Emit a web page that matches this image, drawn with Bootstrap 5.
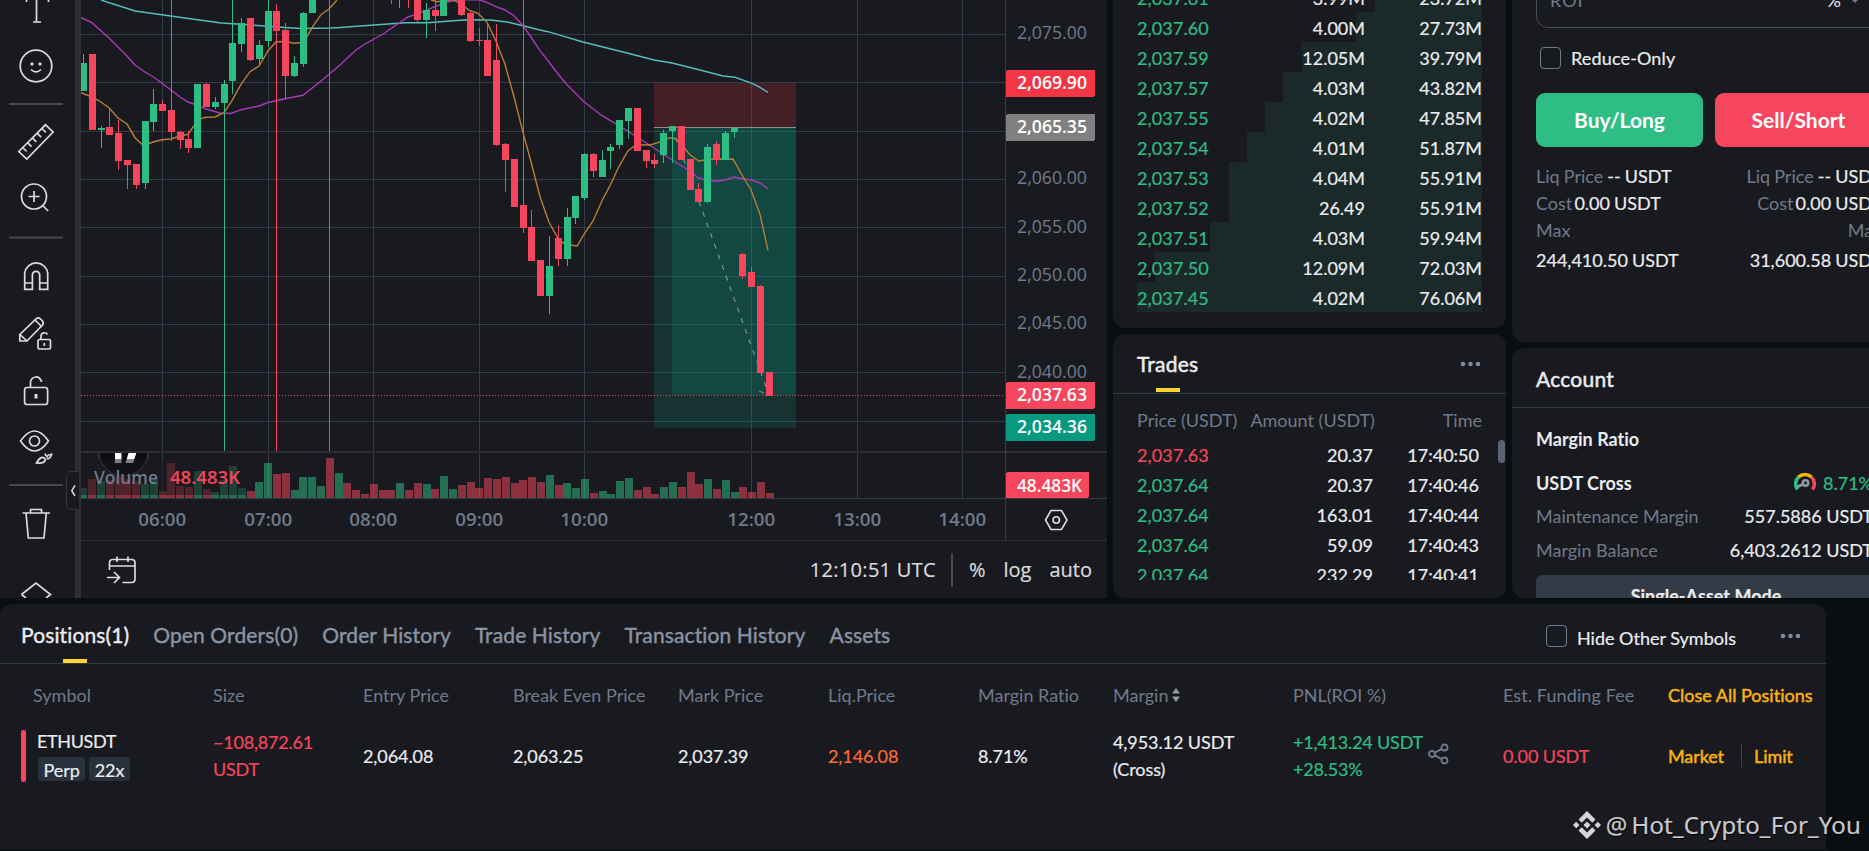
<!DOCTYPE html>
<html lang="en" data-bs-theme="dark">
<head>
<meta charset="utf-8">
<meta name="viewport" content="width=device-width, initial-scale=1">
<title>ETHUSDT Perpetual</title>
<link href="https://cdn.jsdelivr.net/npm/bootstrap@5.3.0/dist/css/bootstrap.min.css" rel="stylesheet">
<style>
:root{--panel:#191a1f;--page:#0b0e11;--line:#333b47;--txt:#eaecef;--dim:#707a8a;--buy:#2ebd85;--sell:#f6465d;--gold:#f8b014}
body{width:1869px;height:851px;overflow:hidden;background:var(--page);color:var(--txt);font:18px/30px Lato,"Liberation Sans",sans-serif;font-variant-numeric:tabular-nums;font-variant-ligatures:none;-webkit-text-stroke:.2px;margin:0}
.c-dim{color:var(--dim);-webkit-text-stroke:0}.c-buy{color:var(--buy)}.c-sell{color:var(--sell)}.c-gold{color:var(--gold)}.c-warn{color:#ff6838}
.c-gold{-webkit-text-stroke:.5px}
svg{-webkit-text-stroke:0}
.panel{background:var(--panel);border-radius:12px;overflow:hidden}
.top-area{height:598px;gap:6px}
.chart-col{width:1107px;background:var(--panel)}
.toolbar-l{width:75px}
.gutter{width:6px;background:#2e2e30}
.tv{font-family:"Open Sans","Noto Sans",sans-serif}
.foot-bar{height:57px;border-top:1px solid #2e2e30;font-size:20px;padding:1px 15px 0 26px;color:#dbdbdb}
.foot-sep{width:2px;height:34px;background:#4a4a4e;margin:0 16px 0 15px}
.foot-gap{margin-left:18px}
.collapse-tab{left:66px;top:471px}
.col-w{width:393px}
.gap-top{margin-top:6px}
.book{height:328px;border-radius:0 0 12px 12px}
.book-rows{margin-top:-18px;padding:0 24px}
.book-row{display:grid;grid-template-columns:117px 111px 117px;height:30px;line-height:32px}
.book-row .c-buy,.trade-row .c-buy,.trade-row .c-sell{letter-spacing:.12px}
.trades{height:264px}
.head{height:60px;border-bottom:1px solid var(--line);font-size:21px;padding:1px 24px 0;letter-spacing:.25px;-webkit-text-stroke:.5px}
.mark-y{height:4px;width:24px;background:#fcd535}
.trade-head{padding:11px 24px 5px}
.trade-row{display:grid;grid-template-columns:116px 120px 106px;height:30px}
.trade-list{height:140px;overflow:hidden;padding:0 24px}
.thumb{right:1px;top:106px;width:7px;height:23px;border-radius:4px;background:#5b6370}
.col-r{width:394px}
.order{height:342px;border-radius:0 0 12px 12px;padding:0 24px}
.roi{height:60px;margin-top:-32px;border:1px solid #474d57;border-radius:12px;padding:16px 12px 0 13px}
.box{width:21px;height:22px;border:1.5px solid #707a8a;border-radius:4px}
.trade-btn{width:167px;height:54px;border-radius:9px;border:0;color:#fff;font-size:21px;font-weight:700;padding:0;-webkit-text-stroke:0}
.bg-buy{background:var(--buy)}.bg-sell{background:var(--sell)}
.est{line-height:27px;margin-top:16px;word-spacing:-.5px}
.est .cost{margin-right:-2px}
.account{height:250px}
.account .body-x{padding:0 33px 0 24px}
.account b{-webkit-text-stroke:0}
.single{height:54px;margin-top:10px;margin-right:-11px;padding-right:8px;background:var(--line);border-radius:6px;font-weight:700;line-height:42px}
.positions{width:1826px;height:246px;margin-top:6px;border-radius:12px 12px 0 0}
.tabs-row{height:60px;border-bottom:1px solid var(--line);font-size:21px;padding:0 21px;gap:24px;color:#8b94a3;letter-spacing:.12px;-webkit-text-stroke:.4px}
.tabs-row .tab-t{margin-top:16px}
.tabs-row .on{color:var(--txt)}
.hide-sym{font-size:18px;padding-top:8px;letter-spacing:0;-webkit-text-stroke:.2px}
.pos-grid{display:grid;grid-template-columns:180px 150px 150px 165px 150px 150px 135px 180px 210px 165px 160px;padding-left:33px;align-items:center}
.pos-head{margin-top:16px}
.pos-row{line-height:27px;height:56px;margin-top:18px;letter-spacing:-.08px}
.side{width:5px;height:52px;border-radius:2px;background:var(--sell);margin:0 11px 0 -12px}
.chip{background:#29313d;border-radius:4px;height:24px;line-height:26px;padding:0 5.5px}
.act-sep{width:1px;height:24px;background:#3b4350;margin:0 12px 0 17px}
.wm{right:8px;bottom:8px;font:24px/36px "Noto Sans",sans-serif;letter-spacing:.15px;color:#c8c9cb;text-shadow:1px 1px 1px #000}
.nowrap{white-space:nowrap}
</style>
</head>
<body>
<div class="d-flex top-area overflow-hidden">
  <section class="chart-col d-flex position-relative flex-shrink-0">
    <div class="toolbar-l">
      <svg width="75" height="598" fill="none" stroke="#dbdbdb" stroke-width="1.7">
        <path d="M36.5 0V22M33 22h8M26.500 0v2M48.500 0v2"/>
        <circle cx="36" cy="66" r="15.800"/><path d="M31 69.500q5 5 10 0"/><circle cx="32" cy="64" r="1.200" fill="#dbdbdb" stroke-width="1"/><circle cx="40" cy="64" r="1.200" fill="#dbdbdb" stroke-width="1"/>
        <path d="M9 104H63M9 237.500H63M9 485H63" stroke="#4a4a4e" stroke-width="2"/>
        <path d="M18.800 151.500L45.500 124.800l7.600 7.200L26.800 159zM22.700 147.500l4 4M27.500 142.700l4 4M32.300 137.900l4 4M37.100 133.100l4 4M41.900 128.500l4 4"/>
        <circle cx="34" cy="196.500" r="12.500"/><path d="M34 191v11M28.500 196.500h11M42.700 205.500l5.500 5.500"/>
        <path d="M24.700 289.300V273a11.600 11.600 0 0 1 23 0V289.300h-8V274.500a3.700 3.700 0 0 0-7.300 0V289.300zM24.700 283h7.700M39.800 283h8"/>
        <path d="M19.800 341v-6.500L36.500 318.500q2-1.500 4 .5l2 2q1.500 2 0 4L27 341zM20 334.500l7 6.500M35 320l7 7"/>
        <rect x="38" y="339.500" width="12.500" height="9.500" rx="1.500"/><path d="M41 339v-3a3.500 3.500 0 0 1 6.500-1.500M44.300 343v3"/>
        <rect x="24.600" y="387.500" width="23" height="17" rx="2.500"/><path d="M30.500 387v-4a5.500 5.500 0 0 1 11-1"/><path d="M36 394v4.500" stroke-width="3"/>
        <path d="M20.500 441q14-20 28 0q-14 20-28 0z"/><circle cx="34.500" cy="441" r="5"/>
        <path d="M36.500 463q5-9 9-3.500q-1 4.500-9 3.500zM47 458q-1-3 5.500-4M46 456l-1-2.500M47 459q3 0 5-5"/>
        <path d="M22.500 513H50M30.500 513v-3.500h11V513M26 513l2.300 25H44L46.300 513"/>
        <path d="M21.500 594.500L36 583l14.500 11.500L46 598M21.500 594.500L26 598"/>
      </svg>
    </div>
    <div class="gutter"></div>
    <div class="d-flex flex-column flex-grow-1">
      <svg id="chart" class="tv d-block" width="1026" height="540" viewBox="81 0 1026 540" shape-rendering="crispEdges"></svg>
      <div class="foot-bar tv d-flex align-items-center">
        <svg width="30" height="30" viewBox="0 0 30 30" fill="none" stroke="#dbdbdb" stroke-width="1.700"><path d="M2.500 15V7.500a3 3 0 0 1 3-3H25a3 3 0 0 1 3 3V24.500a3 3 0 0 1-3 3H15.500M2.500 11H28M10 1.500v5.500M21 1.500v5.500M0 22.500H12M7 17l5.500 5.500L7 28"/></svg>
        <span class="ms-auto nowrap" style="letter-spacing:.3px">12:10:51 UTC</span><span class="foot-sep"></span><span>%</span><span class="foot-gap">log</span><span class="foot-gap">auto</span>
      </div>
    </div>
    <svg class="position-absolute collapse-tab" width="13" height="40" fill="none"><path d="M13 .5H5a4.500 4.500 0 0 0-4.500 4.500V34a4.500 4.500 0 0 0 4.500 4.500h8" fill="#191a1f" stroke="#34353a"/><path d="M9 14.500l-3.200 5.200L9 25" stroke="#dbdbdb" stroke-width="1.500"/></svg>
  </section>

  <section class="d-flex flex-column col-w flex-shrink-0">
    <div class="panel book"><div class="book-rows" id="book"></div></div>
    <div class="panel trades position-relative gap-top">
      <div class="head d-flex justify-content-between">
        <div class="d-flex flex-column align-items-center"><span class="lh-1" style="margin-top:18px">Trades</span><span class="mark-y" style="margin-top:14px"></span></div>
        <svg width="22" height="60" fill="#8089a0" style="margin-right:1px"><circle cx="4" cy="29" r="2.300"/><circle cx="11.500" cy="29" r="2.300"/><circle cx="19" cy="29" r="2.300"/></svg>
      </div>
      <div class="d-flex c-dim nowrap trade-head"><span>Price (USDT)</span><span style="margin-left:13px">Amount (USDT)</span><span class="ms-auto">Time</span></div>
      <div class="trade-list" id="trades"></div>
      <div class="thumb position-absolute"></div>
    </div>
  </section>

  <section class="col-r flex-shrink-0">
    <div class="panel order">
      <div class="roi d-flex c-dim justify-content-between"><span style="letter-spacing:1px">ROI</span><span class="d-flex gap-2" style="color:var(--txt);padding-right:8px">%<svg width="12" height="30" fill="#707a8a"><path d="M2 14h8l-4 4z"/></svg></span></div>
      <div class="d-flex align-items-center" style="margin:15px 0 0 4px"><span class="box"></span><span style="margin-left:10px;letter-spacing:.15px">Reduce-Only</span></div>
      <div class="d-flex justify-content-between" style="margin-top:20px"><button class="trade-btn bg-buy">Buy/Long</button><button class="trade-btn bg-sell">Sell/Short</button></div>
      <div class="d-flex justify-content-between est">
        <div><span class="c-dim">Liq Price</span> -- USDT<br><span class="c-dim cost">Cost</span> 0.00 USDT<br><span class="c-dim">Max</span><br><span class="d-block" style="margin-top:3px">244,410.50 USDT</span></div>
        <div class="text-end"><span class="c-dim">Liq Price</span> -- USDT<br><span class="c-dim cost">Cost</span> 0.00 USDT<br><span class="c-dim">Max</span><br><span class="d-block" style="margin-top:3px">31,600.58 USDT</span></div>
      </div>
    </div>
    <div class="panel account gap-top">
      <div class="head lh-1" style="padding-top:20px">Account</div>
      <div class="body-x">
        <div class="fw-bold" style="margin-top:16px;-webkit-text-stroke:0">Margin Ratio</div>
        <div class="d-flex justify-content-between" style="margin-top:14px"><b>USDT Cross</b>
          <span class="c-buy d-flex align-items-center" style="gap:6px"><svg width="24" height="22" fill="none" stroke-width="3.600" style="margin-top:-3px"><path d="M4.500 18.500A9.500 9.500 0 0 1 5.500 6" stroke="#2ebd85"/><path d="M5.500 6a9.500 9.500 0 0 1 13 0" stroke="#f0b90b"/><path d="M18.500 6a9.500 9.500 0 0 1 1 12.500" stroke="#f6465d"/><circle cx="12.500" cy="12" r="2.700" stroke="#929aa5" stroke-width="2.600"/><path d="M4 16l6.500-3" stroke="#929aa5" stroke-width="2.500"/></svg>8.71%</span></div>
        <div class="d-flex justify-content-between" style="margin-top:3px"><span class="c-dim">Maintenance Margin</span><span>557.5886 USDT</span></div>
        <div class="d-flex justify-content-between" style="margin-top:4px"><span class="c-dim">Margin Balance</span><span>6,403.2612 USDT</span></div>
        <div class="single text-center">Single-Asset Mode</div>
      </div>
    </div>
  </section>
</div>

<section class="panel positions">
  <div class="tabs-row d-flex nowrap">
    <div class="on d-flex flex-column align-items-center"><span class="tab-t">Positions(1)</span><span class="mark-y mt-auto"></span></div>
    <span class="tab-t">Open Orders(0)</span><span class="tab-t">Order History</span><span class="tab-t">Trade History</span><span class="tab-t">Transaction History</span><span class="tab-t">Assets</span>
    <div class="d-flex align-items-center ms-auto on hide-sym"><span class="box" style="margin-top:-4px"></span><span style="margin-left:10px">Hide Other Symbols</span>
    <svg width="22" height="20" fill="#8089a0" style="margin:-1px 4px 0 43px"><circle cx="4" cy="9" r="2.300"/><circle cx="11.500" cy="9" r="2.300"/><circle cx="19" cy="9" r="2.300"/></svg></div>
  </div>
  <div class="pos-grid pos-head c-dim nowrap">
    <span>Symbol</span><span>Size</span><span>Entry Price</span><span>Break Even Price</span><span>Mark Price</span><span>Liq.Price</span><span>Margin Ratio</span>
    <span>Margin <svg width="10" height="16" fill="#929aa5" style="margin:-4px 0 0 -2px"><path d="M5 1l4 5.500H1zM5 15l4-5.500H1z"/></svg></span><span>PNL(ROI %)</span><span style="letter-spacing:.1px">Est. Funding Fee</span><span class="c-gold">Close All Positions</span>
  </div>
  <div class="pos-grid pos-row nowrap">
    <div class="d-flex align-items-center"><span class="side"></span><div style="margin-top:-4px"><div style="letter-spacing:-.35px">ETHUSDT</div><div class="d-flex" style="gap:4px;margin:2px 0 0 1px"><span class="chip">Perp</span><span class="chip">22x</span></div></div></div>
    <span class="c-sell" style="letter-spacing:-.2px">−108,872.61<br>USDT</span><span>2,064.08</span><span>2,063.25</span><span>2,037.39</span><span class="c-warn">2,146.08</span><span>8.71%</span>
    <span>4,953.12 USDT<br>(Cross)</span>
    <span class="c-buy d-flex align-items-center"><span style="letter-spacing:-.2px">+1,413.24 USDT<br>+28.53%</span>
      <svg width="22" height="22" fill="none" stroke="#707a8a" stroke-width="1.800" style="margin:-4px 0 0 5px"><circle cx="4" cy="11" r="3"/><circle cx="16.500" cy="4.500" r="3"/><circle cx="16.500" cy="17.500" r="3"/><path d="M6.700 9.600l7.200-3.700M6.700 12.400l7.200 3.700"/></svg></span>
    <span class="c-sell">0.00 USDT</span>
    <span class="c-gold d-flex">Market<i class="act-sep"></i>Limit</span>
  </div>
</section>
<div class="wm position-absolute d-flex align-items-center nowrap">
  <svg width="28" height="28" viewBox="0 0 28 28" fill="#d4d5d7"><path d="M14 0l8.500 8.500-3.200 3.200L14 6.400l-5.300 5.300-3.200-3.200zM14 28l8.500-8.500-3.200-3.200L14 21.600l-5.300-5.300-3.200 3.200zM3.200 10.800L6.400 14l-3.200 3.200L0 14zM24.800 10.800L28 14l-3.200 3.200-3.200-3.200zM14 10.500l3.500 3.500-3.500 3.500-3.500-3.500z"/></svg>
  <span style="margin-left:5px">@</span><span style="margin-left:4px">Hot_Crypto_For_You</span>
</div>

<script src="https://cdn.jsdelivr.net/npm/bootstrap@5.3.0/dist/js/bootstrap.bundle.min.js"></script>
<script>
// Order book: price, amount, cumulative total, depth bar width
document.getElementById('book').innerHTML=[
['2,037.61','3.99M','23.72M',107],['2,037.60','4.00M','27.73M',126],['2,037.59','12.05M','39.79M',180],['2,037.57','4.03M','43.82M',199],
['2,037.55','4.02M','47.85M',217],['2,037.54','4.01M','51.87M',235],['2,037.53','4.04M','55.91M',253],['2,037.52','26.49','55.91M',253],
['2,037.51','4.03M','59.94M',272],['2,037.50','12.09M','72.03M',327],['2,037.45','4.02M','76.06M',345]
].map(([p,a,t,w])=>`<div class="book-row" style="background:linear-gradient(#1b2929,#1b2929) right/${w}px 100% no-repeat"><span class="c-buy">${p}</span><span class="text-end">${a}</span><span class="text-end">${t}</span></div>`).join('');
document.getElementById('trades').innerHTML=[
['2,037.63','20.37','17:40:50'],['2,037.64','20.37','17:40:46'],['2,037.64','163.01','17:40:44'],['2,037.64','59.09','17:40:43'],['2,037.64','232.29','17:40:41']
].map(([p,a,t],i)=>`<div class="trade-row"><span class="${i?'c-buy':'c-sell'}">${p}</span><span class="text-end">${a}</span><span class="text-end">${t}</span></div>`).join('');

// Chart
const G='#2ebd85',R='#f6465d';let s='';
const rect=(x,y,w,h,f,o='')=>s+=`<rect x="${x}" y="${y}" width="${w}" height="${h}" fill="${f}" ${o}/>`;
for(const x of [162,268,373,479,584,751,857,962])rect(x,0,1,498,'#333b47');
for(const y of [34,82,131,179,227,276,324,372,421])rect(81,y,924,1,'#333b47');
rect(654,83,142,44,'#f23645','opacity=".2"');
rect(654,128,142,300,'#089981','opacity=".2"');
rect(672,128,124,267,'#089981','opacity=".2"');
rect(654,127,142,1,'#8a8c90');
s+='<g shape-rendering="auto"><path d="M672 127L769 395" stroke="#8a8c90" stroke-width="1.2" stroke-dasharray="5 6.300" fill="none"/><path d="M759 391l5 2" stroke="#8a8c90"/>';
const line=(p,c)=>s+=`<polyline points="${p}" fill="none" stroke="${c}" stroke-width="1.4"/>`;
line('101,0 135,11 185,18 221,23 245,24.5 285,27.5 301,28.5 330,28 340,27.500 405,22.700 427,22.700 467,19.700 490,20 507,22 523,25.700 540,30 548,31.700 583,42 603,47 630,53.700 654,60 672,63 700,70 723,76 735,77.300 752,83.300 760,87.300 768,92.500','#57bcbc');
line('81,17.700 92,22.700 109,38 127,56 135,65 145,72 155,78 171,90 180,97 188,102 197,105 206,109 220,113 231,113.500 241,109.700 259,106 268,102.500 285,98.700 303,95.300 321,81 340,65 356,50 365,44 383,34 408,17 417,14 435,6.700 448,1.700 461,-.5 480,0 487,2.300 496,6.700 505,10 514,15.700 523,25.700 531,37 540,50.700 549,62 558,74 567,84.700 584,101.700 602,115.700 619,125.700 637,137 654,148 672,160 690,171 698,177.500 707,180.300 716,181.300 725,180 734,177 743,178.700 751,180 760,183 768,188.700','#a83ab8');
line('81,92.700 92,97 101,102 109,107.700 118,118 127,124 135,137.700 142,144.300 148,144 153,142 162,139.700 171,139 180,136 188,134.300 193,127 201,118.700 206,117.300 215,117 224,112.700 232,100.700 241,84.300 250,71.700 259,66 268,51 276,41.700 286,41.500 294,43.300 304,42.300 312,27.700 321,14.700 329,9 337,0','#b97f35');
line('431,0 437,1.700 453,-.5 462,5 470,10.700 478,13.300 487,22.300 496,41 505,64.300 514,96.700 523,132.300 531,161.700 540,196.700 549,222.300 558,238.300 565,244.300 577,246 584,234.300 593,221 602,200.700 610,185.700 619,166.300 628,150.700 635,145.700 637,144.700 650,145 658,142.700 670,137.700 675,138.700 681,144 690,154.700 699,161.300 707,159.300 733,159 742,175 751,189.700 760,214.300 768,250.300','#b97f35');
s+='</g>';
for(let x=81;x<1004;x+=3)rect(x,395,1,1,R);
// wick centre, body top, body bottom, wick top, wick bottom, colour (1 = up)
const K=[[83,63,91,54,91,1],[92,54,130,54,130,0],[101,128,130,126,148,1],[109,127,135,108,135,0],[118,133,161,120,170,0],[127,160,165,160,189,0],[136,164,185,164,189,0],[145,121,183,121,189,1],[153,104,122,89,131,1],[162,104,111,100,111,0],[171,110,132,0,141,0],[180,132,140,131,149,0],[188,139,148,131,153,0],[197,84,148,84,148,1],[206,84,107,83,107,0],[215,102,107,97,109,1],[224,84,103,80,452,1],[232,43,81,0,94,1],[241,23,44,18,52,1],[250,18,60,18,61,0],[259,45,59,40,66,1],[268,11,41,0,47,1],[276,11,31,4,452,0],[285,30,76,23,99,0],[294,63,76,56,77,1],[303,13,64,12,67,1],[312,0,13,0,13,1],[329,-9,0,0,452,0],[391,-9,0,0,4,0],[399,-9,0,0,8,1],[408,-9,0,0,8,0],[417,0,20,0,22,0],[426,10,20,3,38,1],[435,10,16,0,31,0],[443,0,16,0,16,1],[461,0,15,0,16,0],[470,13,41,11,42,0],[479,40,41,28,46,0],[487,40,76,23,76,0],[496,60,145,24,146,0],[505,144,160,143,192,0],[514,159,207,159,207,0],[523,205,228,0,233,0],[531,227,261,210,261,0],[540,260,296,260,296,0],[549,266,296,236,314,1],[558,238,259,225,266,0],[567,217,259,208,266,1],[575,196,218,196,224,1],[584,154,198,153,200,1],[593,154,171,153,177,0],[602,160,177,150,177,1],[610,147,151,144,169,1],[619,120,145,120,149,1],[628,108,121,108,139,1],[637,108,151,108,151,0],[646,150,161,150,168,0],[654,160,164,154,168,0],[663,133,155,130,163,1],[672,126,131,126,163,1],[681,126,160,126,160,0],[690,159,190,159,190,0],[698,189,202,183,202,0],[707,147,202,144,203,1],[716,144,160,141,165,0],[725,133,160,131,160,1],[734,128,132,128,138,1],[742,254,276,253,279,0],[751,272,287,267,287,0],[760,286,373,285,373,0],[769,372,396,372,396,0]];
for(const [c,a,b,t,u,g] of K){rect(c,t,1,u-t,g?G:R);rect(c-3,a,7,b-a,g?G:R)}
rect(81,451,1026,2,'#2e2e30');
// Volume: bar tops from y=498, colour by letter
const V='g488 r479 g481 r480 r477 r479 r481 g484 g480 r491 r463 r486 r487 g471 r489 g492 g480 g466 g488 r491 g482 g463 r474 r473 g490 g477 g477 g486 r458 g473 r483 r490 r494 r484 r490 r490 g483 r490 r483 g484 r489 g476 g489 r485 r482 r488 r478 r479 r477 r483 r480 r477 r482 g475 r485 g483 g488 g479 r493 g491 g494 g481 g478 r490 r487 r494 g487 g482 r487 r472 r484 g479 r489 g480 g492 r487 r492 r482 r493'.split(' ');
V.forEach((v,i)=>{const x=Math.round(79.3+8.8*i),y=+v.slice(1);rect(x,y,8,498-y,v[0]=='g'?G:R,'opacity=".52"')});
s+='<g clip-path="url(#vp)" shape-rendering="auto"><circle cx="123.5" cy="451" r="25" fill="#0b0d12" stroke="#3a3b40" stroke-width="1.500"/><path d="M115 445h6.500v18H115zM131 445h8l-6 18h-7.500z" fill="#fff"/></g><clipPath id="vp"><rect x="81" y="453" width="400" height="45"/></clipPath>';
rect(81,459,165,36,'#191a1f','opacity=".55"');
rect(81,498,1026,1,'#333b47');rect(1005,0,1,540,'#333b47');
const T=(x,y,w,t,c,z,b,a='start')=>s+=`<text x="${x}" y="${y}" textLength="${w}" lengthAdjust="spacingAndGlyphs" font-size="${z}" font-weight="${b}" fill="${c}" text-anchor="${a}">${t}</text>`;
T(94,484,64,'Volume','#707a8a',18,600);T(170,484,70,'48.483K',R,18,600);
[[162,'06'],[268,'07'],[373,'08'],[479,'09'],[584,'10'],[751,'12'],[857,'13'],[962,'14']].forEach(([x,h])=>T(x+.3,526,48,h+':00','#707a8a',17.5,600,'middle'));
[[39,'2,075'],[184,'2,060'],[233,'2,055'],[281,'2,050'],[329,'2,045'],[378,'2,040'],[427,'2,035']].forEach(([y,p])=>T(1017,y,70,p+'.00','#707a8a',17.5,500));
[[70,'2,069.90','#f23645'],[114,'2,065.35','#808080'],[382,'2,037.63',R],[414,'2,034.36','#089981']].forEach(([y,p,c])=>{rect(1006,y,89,27,c,'rx="2"');T(1017,y+19,70,p,'#fff',17.5,600)});
rect(1006,472,83,26,R,'rx="2"');T(1017,492,65,'48.483K','#fff',17.5,600);
s+='<g fill="none" stroke="#dbdbdb" stroke-width="1.6" shape-rendering="auto"><path d="M1045.500 520l5.500-9.500h10.500l5.500 9.500-5.500 9.500H1051z"/><circle cx="1056.300" cy="520" r="3.200"/></g>';
document.getElementById('chart').innerHTML=s;
</script>
</body>
</html>
